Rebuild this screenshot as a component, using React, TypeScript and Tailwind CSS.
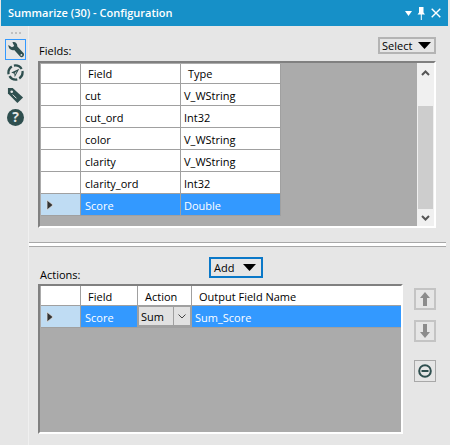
import React from "react";

const font = { fontFamily: '"Open Sans", "Noto Sans", sans-serif' };

function Arrow() {
  return (
    <svg width="8" height="12" viewBox="0 0 8 12" className="block">
      <path d="M1 1 L7 6 L1 11 Z" fill="#333" stroke="#ddd" strokeWidth="0.8" />
    </svg>
  );
}

function Wrench() {
  return (
    <svg width="18" height="18" viewBox="0 0 20 20">
      <path d="M1.5 4.5 L5.5 7 L8 5.5 L6 1.5 C9 .5 11.5 2.5 11.5 6 L18.5 13.5 C19.5 15 18.5 18 16 18 L14.8 17.5 L8 10 C4.5 11 1.5 8.5 1.5 4.5 Z" fill="#2f4f4f" />
      <circle cx="16" cy="15.5" r="1" fill="#e6e6e6" />
    </svg>
  );
}

function Compass() {
  return (
    <svg width="17" height="17" viewBox="0 0 18 18">
      <circle cx="9" cy="9" r="7.5" fill="none" stroke="#2f4f4f" strokeWidth="2.4" strokeDasharray="9.5 2.3" strokeDashoffset="2" />
      <path d="M13 5 L8.2 14 L7.7 10.2 L4.5 9 Z" fill="#2f4f4f" />
      <path d="M10.5 7.5 L8.5 11 L8.3 9.5 Z" fill="#e6e6e6" />
    </svg>
  );
}

function Tag() {
  return (
    <svg width="17" height="17" viewBox="0 0 18 18">
      <path d="M1 5 L1 1 L6 1 L17 11 L11 17 L1 7 Z" fill="#2f4f4f" />
      <circle cx="5" cy="5" r="1.4" fill="#e6e6e6" />
      <path d="M6 8 L10 12" stroke="#e6e6e6" strokeWidth="1" />
    </svg>
  );
}

function Help() {
  return (
    <div className="w-[17px] h-[17px] rounded-full bg-[#2f4f4f] flex items-center justify-center text-[#e6e6e6] text-[14px] font-bold leading-none">
      ?
    </div>
  );
}

function Caret() {
  return (
    <svg width="13" height="7" viewBox="0 0 13 7">
      <path d="M0 0 H13 L6.5 7 Z" fill="#000" />
    </svg>
  );
}

function Cell({ w, children, cls = "" }: { w: string; children?: React.ReactNode; cls?: string }) {
  return <div className={`${w} shrink-0 h-full flex items-center border-r border-b border-[#a0a0a0] ${cls}`}>{children}</div>;
}

const rows = [
  ["cut", "V_WString"],
  ["cut_ord", "Int32"],
  ["color", "V_WString"],
  ["clarity", "V_WString"],
  ["clarity_ord", "Int32"],
];

function FieldsGrid() {
  return (
    <div className="flex-1 pt-[1px] pl-[1px] flex flex-col">
      <div className="flex h-[20px] bg-white w-[240px]">
        <Cell w="w-[40px]" />
        <Cell w="w-[100px]" cls="pl-[7px] pt-[2px]">Field</Cell>
        <Cell w="w-[100px]" cls="pl-[7px] pt-[2px]">Type</Cell>
      </div>
      {rows.map(([a, b]) => (
        <div key={a} className="flex h-[22px] bg-white w-[240px]">
          <Cell w="w-[40px]" />
          <Cell w="w-[100px]" cls="pl-[4px] pt-[3px]">{a}</Cell>
          <Cell w="w-[100px]" cls="pl-[3px] pt-[3px]">{b}</Cell>
        </div>
      ))}
      <div className="flex h-[22px] w-[240px] bg-[#3399ff] text-white">
        <Cell w="w-[40px]" cls="bg-[#bfdcf3] pl-[5px] pt-[1px]"><Arrow /></Cell>
        <Cell w="w-[100px]" cls="pl-[4px] pt-[3px]">Score</Cell>
        <Cell w="w-[100px]" cls="pl-[3px] pt-[3px]">Double</Cell>
      </div>
    </div>
  );
}

function ScrollBar() {
  return (
    <div className="w-[17px] bg-[#f0f0f0] flex flex-col items-center">
      <div className="h-[43px] w-full pt-[7px] flex justify-center shrink-0">
        <svg width="9" height="6" viewBox="0 0 9 6"><path d="M1 5 L4.5 1.5 L8 5" fill="none" stroke="#555" strokeWidth="2" /></svg>
      </div>
      <div className="flex-1 w-[15px] bg-[#cdcdcd]" />
      <div className="h-[17px] w-full pt-[6px] flex justify-center shrink-0">
        <svg width="9" height="6" viewBox="0 0 9 6"><path d="M1 1 L4.5 4.5 L8 1" fill="none" stroke="#555" strokeWidth="2" /></svg>
      </div>
    </div>
  );
}

function ActionButton({ children }: { children: React.ReactNode }) {
  return (
    <div className="w-[22px] h-[22px] border-2 border-[#c4c4c4] bg-[#e6e6e6] flex items-center justify-center">{children}</div>
  );
}

function UpDown({ down }: { down?: boolean }) {
  return (
    <svg width="10" height="14" viewBox="0 0 10 14" className={down ? "rotate-180" : ""}>
      <path d="M5 0 L10 6 H7 V14 H3 V6 H0 Z" fill="#8c8c8c" />
    </svg>
  );
}

export default function App() {
  return (
    <div className="w-[450px] h-[445px] bg-[#e6e6e6] text-[11px] text-black overflow-hidden flex flex-col" style={font}>
      <div className="h-[26px] ml-[1px] mr-[2px] bg-[#1690c8] flex items-center justify-between text-white shrink-0">
        <span className="pl-[7px] text-[11px] font-semibold">Summarize (30) - Configuration</span>
        <div className="flex items-center gap-[5px] pr-[7px]">
          <svg width="7" height="5" viewBox="0 0 7 5"><path d="M0 0 H7 L3.5 5 Z" fill="#fff" /></svg>
          <svg width="8" height="13" viewBox="0 0 8 13"><path d="M2 0 H6.5 V5.5 L8 7.5 H4.8 V13 H3.8 V7.5 H.5 L2 5.5 Z" fill="#fff" /></svg>
          <svg width="10" height="10" viewBox="0 0 10 10" className="ml-[1px]"><path d="M.7 .7 L9.3 9.3 M9.3 .7 L.7 9.3" stroke="#fff" strokeWidth="1.4" /></svg>
        </div>
      </div>
      <div className="flex-1 flex min-h-0">
        <div className="w-[29px] shrink-0 border-r border-[#f0f0f0] flex flex-col items-center pt-[6px] pl-[3px]">
          <div className="h-[6px] flex gap-[2px] items-start shrink-0">
            <div className="w-[2px] h-[2px] bg-[#c0c0c0]" />
            <div className="w-[2px] h-[2px] bg-[#c0c0c0]" />
            <div className="w-[2px] h-[2px] bg-[#c0c0c0]" />
          </div>
          <div className="mt-[1px] w-[21px] h-[21px] border border-[#3399ff] flex items-center justify-center shrink-0"><Wrench /></div>
          <div className="h-[24px] flex items-center"><Compass /></div>
          <div className="h-[22px] flex items-center"><Tag /></div>
          <div className="h-[22px] flex items-center"><Help /></div>
        </div>
        <div className="flex-1 flex flex-col min-w-0">
          <div className="h-[202px] flex flex-col shrink-0 pl-[9px] pr-[14px]">
            <div className="h-[35px] flex items-end justify-between shrink-0">
              <span className="pb-[3px] pl-[1px] leading-[14px]">Fields:</span>
              <div className="w-[58px] h-[17px] mb-[7px] border-2 border-[#b4b4b4] flex items-center justify-between pl-[2px] pr-[3px]">
                <span className="leading-none">Select</span>
                <Caret />
              </div>
            </div>
            <div className="h-[167px] flex bg-[#ababab] border-t-2 border-l-2 border-t-[#808080] border-l-[#808080] border-r-2 border-b-2 border-r-white border-b-white shrink-0">
              <FieldsGrid />
              <ScrollBar />
            </div>
          </div>
          <div className="mt-[14px] h-[5px] mr-[4px] border-t border-b border-[#a8a8a8] bg-white shrink-0" />
          <div className="flex-1 flex pl-[9px] pr-[14px]">
            <div className="w-[365px] shrink-0 flex flex-col">
              <div className="h-[37px] relative flex items-end shrink-0">
                <span className="pb-[2px] pl-[2px] leading-[14px]">Actions:</span>
                <div className="absolute left-[171px] top-[10px] w-[54px] h-[21px] border-[2px] border-[#0a78c8] flex items-center justify-between pl-[3px] pr-[5px]">
                  <span className="leading-none">Add</span>
                  <Caret />
                </div>
              </div>
              <div className="h-[150px] bg-[#ababab] border-t-2 border-l-2 border-t-[#808080] border-l-[#808080] border-r-2 border-b-2 border-r-white border-b-white pl-[1px] shrink-0">
                <div className="flex h-[20px] bg-white">
                  <Cell w="w-[40px]" />
                  <Cell w="w-[57px]" cls="pl-[7px] pt-[3px]">Field</Cell>
                  <Cell w="w-[54px]" cls="pl-[7px] pt-[3px]">Action</Cell>
                  <Cell w="flex-1" cls="pl-[7px] pt-[3px] border-r-0">Output Field Name</Cell>
                </div>
                <div className="flex h-[22px] bg-[#3399ff] text-white">
                  <Cell w="w-[40px]" cls="bg-[#bfdcf3] pl-[5px] pt-[1px]"><Arrow /></Cell>
                  <Cell w="w-[57px]" cls="pl-[4px] pt-[3px]">Score</Cell>
                  <Cell w="w-[54px]">
                    <div className="w-full h-full flex text-black border border-[#a0a0a0] border-b-2">
                      <div className="flex-1 bg-[#e1e1e1] pl-[2px] pt-[2px] flex items-center border-r border-[#a0a0a0]">Sum</div>
                      <div className="w-[16px] bg-[#e1e1e1] flex items-center justify-center">
                        <svg width="8" height="5" viewBox="0 0 8 5"><path d="M.5 .5 L4 4 L7.5 .5" fill="none" stroke="#444" strokeWidth="1" /></svg>
                      </div>
                    </div>
                  </Cell>
                  <Cell w="flex-1" cls="pl-[3px] pt-[3px] border-r-0">Sum_Score</Cell>
                </div>
              </div>
            </div>
            <div className="ml-[11px] pt-[41px] flex flex-col shrink-0">
              <ActionButton><UpDown /></ActionButton>
              <div className="mt-[10px]"><ActionButton><UpDown down /></ActionButton></div>
              <div className="mt-[18px]">
                <div className="w-[22px] h-[22px] border border-[#a8a8a8] flex items-center justify-center">
                  <svg width="14" height="14" viewBox="0 0 14 14"><circle cx="7" cy="7" r="5.8" fill="none" stroke="#2f4f4f" strokeWidth="2" /><rect x="3.5" y="6" width="7" height="2" fill="#2f4f4f" /></svg>
                </div>
              </div>
            </div>
          </div>
        </div>
      </div>
    </div>
  );
}
